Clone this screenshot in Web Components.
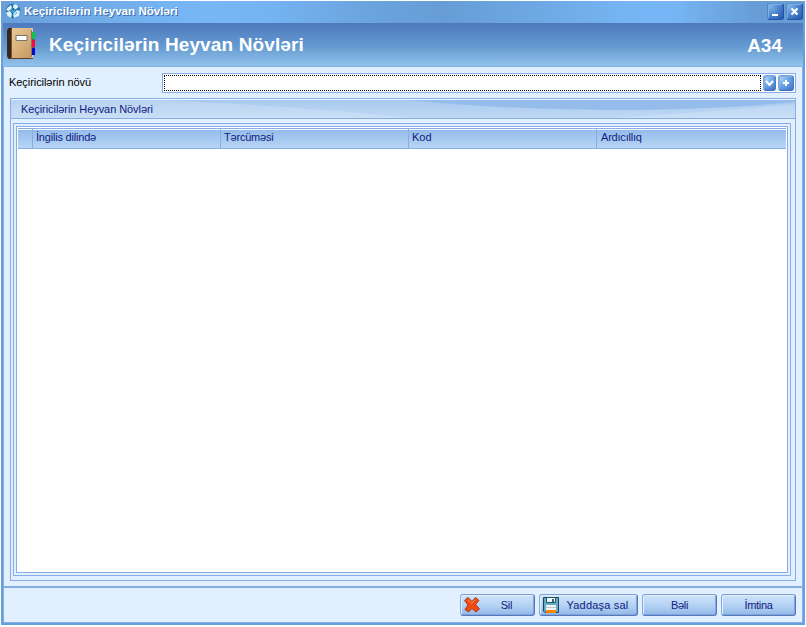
<!DOCTYPE html>
<html lang="az"><head><meta charset="utf-8"><title>Keçiricilərin Heyvan Növləri</title>
<style>body{margin:0;background:#fff;font:11px/13px "Liberation Sans",Arial,sans-serif;overflow:hidden}</style></head>
<body>
<app-window></app-window>
<script>
const define=(name,html)=>customElements.define(name,class extends HTMLElement{
  constructor(){super();this.attachShadow({mode:'open'}).innerHTML='<style>*{box-sizing:border-box}svg{display:block}</style>'+html;}
});

define('app-logo',`<style>:host{display:block;width:16px;height:16px}</style>
<svg width="16" height="16"><circle cx="8" cy="8" r="7.300" fill="#256ea8"/><path d="M8.500 1.500q4-1 5 2.500l-3 2.500-2.500-2zM2 5l4-3 1 3-3 3-2.500-.5zM1 9.500l4-1.500 2 3-1 4-3.500-2zM8 11l4-4 3 1-1 5-5 2z" fill="#d9f6fd"/><path d="M6 6l3 3-1 3M10 6l-1 3M5 8l3 1M12 9l-2 3" stroke="#4fb5e0" fill="none"/></svg>`);

define('book-icon',`<style>:host{display:block;width:30px;height:32px}</style>
<svg width="30" height="32"><defs><linearGradient id="a" x2="1" y2="1"><stop stop-color="#efd09b"/><stop offset="1" stop-color="#c59861"/></linearGradient></defs>
<path d="M2 0h23q1 0 1 1v30H2q-2-1-2-3V3q0-3 2-3z" fill="#d9cdb8"/><path d="M2 0h21q1 0 1 1v30H2q-2-1-2-3V3q0-3 2-3z" fill="url(#a)"/><path d="M2 0h3v31H2q-2-1-2-3V3q0-3 2-3z" fill="#382619"/><path d="M4.500 1v29" stroke="#765338"/><path d="M1 30.500h25" stroke="#5d4026"/><path d="M24.500 2v27" stroke="#8b7355"/><path d="M9 7.500h11v5H9z" fill="#fff" stroke="#77736e"/>
<path d="M25 4h3v8h-3z" fill="#08c843"/><path d="M25 12h3v8h-3z" fill="#f80a3c"/><path d="M25 20h3v7h-3z" fill="#0b05ce"/><path d="M25 11.500h3M25 19.500h3" stroke="#655b70"/></svg>`);

define('square-button',`<style>:host{display:block;width:var(--w,17px);height:var(--h,17px)}
div{width:100%;height:100%;border:1px solid #2550a2;border-top-color:#5b91d0;border-left-color:#4f86ca;border-radius:3px;background:radial-gradient(circle at 10% 10%,#85b9ea,#4c85cd 50%,#2353ae);box-shadow:inset 1px 1px #82b1e5;display:grid;place-items:center}
:host([soft]) div{border-color:#75a4dd #477cc2 #376dba #75a4dd;background:radial-gradient(circle at 15% 15%,#a5d0f4,#5f98dc 60%,#3870c0)}
::slotted(svg){display:block;grid-area:1/1}</style><div><slot></slot></div>`);

define('title-bar',`<style>:host{display:flex;height:22px;padding:0 2px 2px 4px;align-items:center;background:linear-gradient(90deg,#699fd9 0,#72adea 13%,#78b7f7 26%,#75b3f2 33%,#6aa3dc 47%,#669dd5 55%,#6fabe6 69%,#77b6f6 80%,#77b6f6 83%,#679dd5 94%,#669dd5);color:#fff}
span{font-weight:bold;font-size:11.500px;letter-spacing:.06px;margin-left:3px;padding-top:1px;text-shadow:1px 1px #3b6fad;flex:1;white-space:nowrap}
square-button+square-button{margin-left:2px}</style>
<app-logo></app-logo><span>Keçiricilərin Heyvan Növləri</span>
<square-button><svg width="15" height="15"><path d="M4 10h6v2H4z" fill="#fff"/></svg></square-button>
<square-button><svg width="15" height="15"><path d="M4.500 4.500l6 6M10.500 4.500l-6 6" stroke="#fff" stroke-width="2.200"/></svg></square-button>`);

define('page-banner',`<style>:host{display:flex;height:43px;padding:5px 21px 0 4px;background:linear-gradient(#4e79bd,#659bd1 55%,#92c3eb);color:#fff;font-weight:bold;align-items:flex-start}
h1{font-size:19px;line-height:24px;margin:5px 0 0 12px;letter-spacing:.13px;flex:1}b{font-size:19px;line-height:24px;margin-top:6px}</style>
<book-icon></book-icon><h1>Keçiricilərin Heyvan Növləri</h1><b>A34</b>`);

define('combo-row',`<style>:host{display:flex;height:20px;color:#000}
label{width:153px;margin-left:-1px;padding-top:3px;letter-spacing:-.06px}
.box{flex:1;background:#fff;border:1px solid #86aee6;display:flex;padding:1px}.in{flex:1;margin-right:2px;border:1px dotted #000}
square-button{--h:16px}.d{--w:13px}.p{--w:16px;margin-left:2px}</style>
<label>Keçiricilərin növü</label><div class="box"><div class="in"></div>
<square-button soft class="d"><svg width="11" height="14"><path d="M2 5l3.500 4L9 5" stroke="#fff" stroke-width="2" fill="none"/></svg></square-button>
<square-button soft class="p"><svg width="14" height="14"><path d="M7 4v6M4 7h6" stroke="#fff" stroke-width="2"/></svg></square-button></div>`);

define('data-grid',`<style>:host{display:block;height:447px;border:1px solid #86aee6;background:#fff;padding:1px 0 0 1px}
header{display:grid;grid-template-columns:15px repeat(3,188px) 1fr;height:21px;border-top:1px solid #86aee6;border-bottom:1px solid #86aee6;background:linear-gradient(#fff 0 1px,#94bcea 1px,#b7d5f5);margin-right:1px}
span{border-left:1px solid #86aee6;padding:2px 0 0 3px;margin-left:-1px;color:#102080;letter-spacing:-.2px}span:first-child{border:0}</style>
<header><span></span><span>İngilis dilində</span><span>Tərcüməsi</span><span style="letter-spacing:0">Kod</span><span style="padding-left:4px">Ardıcıllıq</span></header>`);

define('group-panel',`<style>:host{display:flex;flex-direction:column;border:1px solid #86aee6;height:483px}
.head{height:20px;position:relative;border-bottom:1px solid #86aee6;border-top:1px solid #edf6ff;color:#102080}
.head svg{position:absolute;inset:0;width:100%;height:100%}.head span{position:relative;display:block;padding:3px 10px;letter-spacing:-.07px}
.inner{margin:4px 4px 4px 2px;padding:2px;border:1px solid #86aee6;flex:1}</style>
<div class="head"><svg viewBox="0 0 784 18" preserveAspectRatio="none"><defs><linearGradient id="g" x2="0" y2="1"><stop stop-color="#b7d2f2"/><stop offset="1" stop-color="#cbdff5"/></linearGradient><linearGradient id="h" x2="0" y2="1"><stop stop-color="#a8c9ef"/><stop offset="1" stop-color="#bfd9f4"/></linearGradient></defs><path d="M0 0h784v18H0z" fill="url(#g)"/><path d="M140 0Q280 5 398 18H600Q700 12 784 4V0z" fill="url(#h)"/><path d="M398 0Q480 9 600 10Q700 10 784 2V0z" fill="#95bcea"/></svg><span>Keçiricilərin Heyvan Növləri</span></div>
<div class="inner"><data-grid></data-grid></div>`);

define('action-button',`<style>:host{display:block;width:75px;height:22px}:host([wide]){width:99px}
button{display:flex;width:100%;height:100%;align-items:center;padding:0 2px;border:1px solid #5578bd;border-top-color:#799fd6;border-left-color:#85acdf;border-radius:3px;background:linear-gradient(#d0e4fa,#b2d1f3 55%,#91b8e7);box-shadow:inset 1px 1px #e2f0fd,inset -1px -1px #7fa7db;color:#102080;font:inherit;letter-spacing:inherit}
span{flex:1;text-align:center;white-space:nowrap}</style><button><slot name="icon"></slot><span><slot></slot></span></button>`);

define('footer-bar',`<style>:host{display:flex;gap:4px;justify-content:flex-end;padding:6px 6px 0 0;height:36px;border-top:2px solid #86aee6}.y{letter-spacing:.2px}.n{letter-spacing:-.3px}</style>
<action-button class="n"><svg slot="icon" width="18" height="18"><path d="M1.500 4.500L5 1.500L9 5.500L12.500 1.500L16 4.500L12.500 8.500L16.500 13L13 16L9 12.500L5.500 16L2 13.500L5 9Z" fill="#f24811" stroke="#a03a22"/><path d="M4.500 3.500l4 4 4-4" stroke="#ff8b4c" fill="none"/></svg>Sil</action-button>
<action-button wide class="y"><svg slot="icon" width="18" height="18"><path d="M1.500 1.500h15v15H3L1.500 15z" fill="#65acc5" stroke="#164459"/><path d="M4.500 1.500h9v5h-9z" fill="#eef5f8" stroke="#265469"/><path d="M10 3h2v3h-2z" fill="#376377"/><path d="M4 9h10v5H4z" fill="#f4f5f4"/><path d="M4 11.500h10" stroke="#bbc5cc"/><path d="M4 14h10v3H4z" fill="#f98200"/></svg>Yaddaşa sal</action-button>
<action-button class="n">Bəli</action-button><action-button class="n">İmtina</action-button>`);

define('app-window',`<style>:host{display:flex;flex-direction:column;width:806px;height:627px;padding-top:1px;border-bottom:1px solid #3c67b5;background:#fff}
.frame{width:804px;height:624px;margin-left:1px;border:solid #659fdc;border-width:0 2px 2px}
title-bar{margin:0 -2px}.body{height:557px;background:#e1effe;border:1px solid #86aee6;display:flex;flex-direction:column}
combo-row{margin:6px 6px 0 6px}group-panel{margin:5px 6px 5px}</style>
<div class="frame"><title-bar></title-bar><page-banner></page-banner><div class="body"><combo-row></combo-row><group-panel></group-panel><footer-bar></footer-bar></div></div>`);
</script></body></html>
